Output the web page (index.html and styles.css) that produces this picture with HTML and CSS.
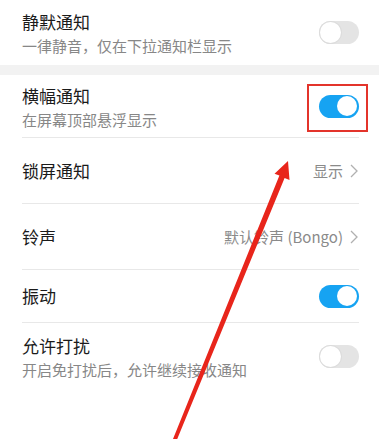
FILE: index.html
```html
<!DOCTYPE html>
<html lang="zh-CN">
<head>
<meta charset="utf-8">
<title>通知设置</title>
<link rel="stylesheet" href="styles.css">
</head>
<body>
<div class="screen">
  <section class="group">
    <div class="row h65">
      <div class="text">
        <div class="title">静默通知</div>
        <div class="sub">一律静音，仅在下拉通知栏显示</div>
      </div>
      <div class="toggle off"><span class="knob"></span></div>
    </div>
  </section>
  <div class="band"></div>
  <section class="group">
    <div class="row h63 line">
      <div class="text pad1">
        <div class="title">横幅通知</div>
        <div class="sub">在屏幕顶部悬浮显示</div>
      </div>
      <div class="toggle on"><span class="knob"></span><span class="highlight"></span></div>
    </div>
    <div class="row h66 line">
      <div class="title">锁屏通知</div>
      <div class="value">显示<svg class="chev" viewBox="0 0 8 14" width="8" height="14"><polyline points="1,1 7,7 1,13" fill="none" stroke="#b0b0b0" stroke-width="1.3"/></svg></div>
    </div>
    <div class="row h66 line">
      <div class="title">铃声</div>
      <div class="value">默认铃声 (Bongo)<svg class="chev" viewBox="0 0 8 14" width="8" height="14"><polyline points="1,1 7,7 1,13" fill="none" stroke="#b0b0b0" stroke-width="1.3"/></svg></div>
    </div>
    <div class="row h53 line">
      <div class="title">振动</div>
      <div class="toggle on"><span class="knob"></span></div>
    </div>
    <div class="row last">
      <div class="text">
        <div class="title">允许打扰</div>
        <div class="sub">开启免打扰后，允许继续接收通知</div>
      </div>
      <div class="toggle off"><span class="knob"></span></div>
    </div>
  </section>
  <svg class="arrow" viewBox="0 0 379 439" width="379" height="439">
    <polygon fill="#e8251b" points="288,161 289.5,180 284.6,178 176.4,441 172.6,440 279.4,175.6 274.5,173.8"/>
  </svg>
</div>
</body>
</html>
```

FILE: styles.css
```css
* { box-sizing: border-box; }
html, body { margin: 0; padding: 0; background: #fff; }
body {
  font-family: "Noto Sans CJK SC", "Noto Sans", sans-serif;
  color: #1a1a1a;
}
.screen {
  position: relative;
  width: 379px;
  height: 439px;
  overflow: hidden;
  background: #fff;
}
.band { height: 10px; background: #f2f2f2; }
.row {
  display: flex;
  align-items: center;
  justify-content: space-between;
  margin: 0 20px 0 22px;
}
.row.line { border-bottom: 1px solid #e8e8e8; }
.h65 { height: 65px; }
.h63 { height: 63px; }
.h66 { height: 66px; }
.h53 { height: 53px; }
.row.last { align-items: flex-start; padding-top: 11px; }
.row.last .toggle { margin-top: 11px; }
.text { display: flex; flex-direction: column; gap: 2px; }
.pad1 { padding-top: 1px; }
.title { font-size: 17px; line-height: 24px; color: #1a1a1a; }
.sub { font-size: 15px; line-height: 20px; color: #878787; }
.value {
  display: flex;
  align-items: center;
  gap: 7px;
  font-size: 15px;
  line-height: 20px;
  color: #8a8a8a;
}
.chev { display: block; margin-right: 1px; }
.toggle {
  position: relative;
  width: 40px;
  height: 23px;
  border-radius: 12px;
  flex: none;
}
.toggle .knob {
  position: absolute;
  top: 1.5px;
  width: 20px;
  height: 20px;
  border-radius: 50%;
  background: #fff;
}
.toggle.on { background: #16a3f2; }
.toggle.on .knob { right: 2px; }
.toggle.off { background: #e4e4e4; }
.toggle.off .knob { left: 1px; top: 1px; width: 21px; height: 21px; box-shadow: 0 0 0 1px #dcdcdc; }
.highlight {
  position: absolute;
  left: -12px;
  right: -9px;
  top: -11px;
  bottom: -14px;
  border: 2px solid #e3342b;
}
.arrow {
  position: absolute;
  left: 0;
  top: 0;
  pointer-events: none;
}
```
